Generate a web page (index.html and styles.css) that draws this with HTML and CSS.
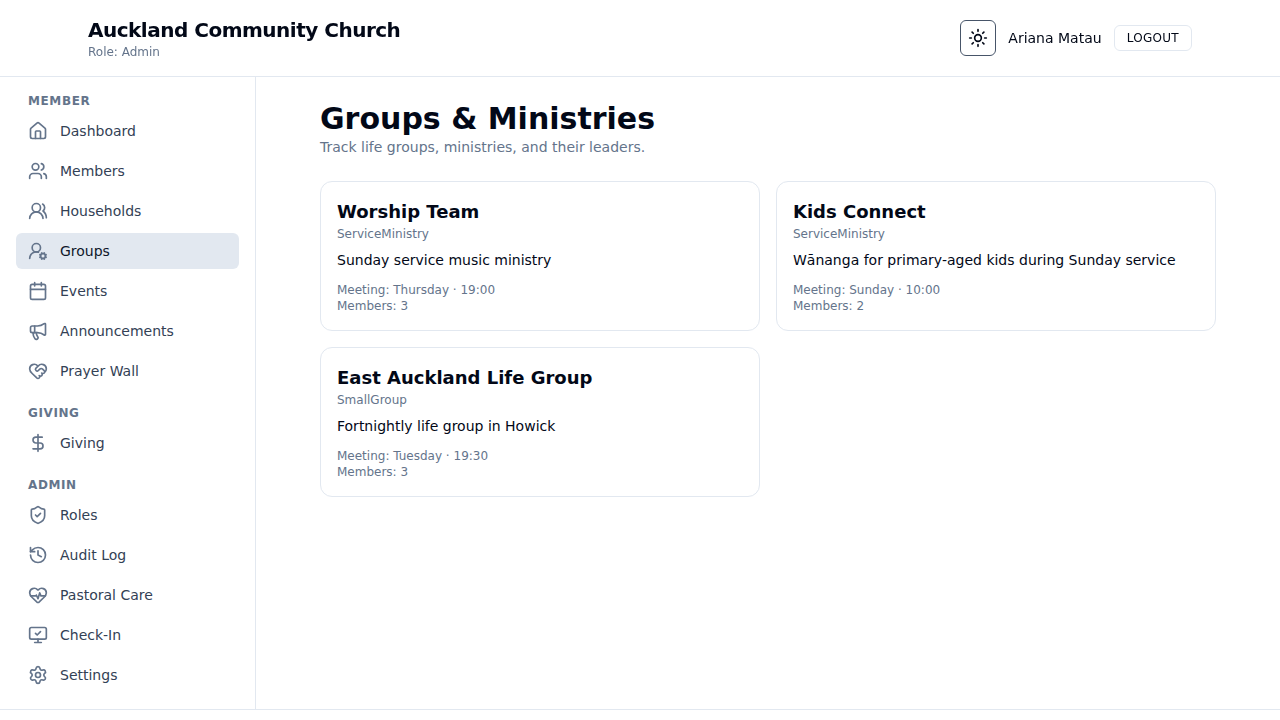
FILE: index.html
```html
<!DOCTYPE html>
<html lang="en">
<head>
<meta charset="utf-8">
<meta name="viewport" content="width=device-width, initial-scale=1">
<title>Groups &amp; Ministries</title>
<link rel="stylesheet" href="styles.css">
</head>
<body>
<header class="topbar">
  <div class="topbar-inner">
    <div>
      <div class="brand">Auckland Community Church</div>
      <p class="role">Role: Admin</p>
    </div>
    <div class="account">
      <button class="theme-toggle" type="button" aria-label="Toggle theme">
        <svg class="icon" viewBox="0 0 24 24"><circle cx="12" cy="12" r="4"/><path d="M12 2v2M12 20v2M4.93 4.93l1.41 1.41M17.66 17.66l1.41 1.41M2 12h2M20 12h2M6.34 17.66l-1.41 1.41M19.07 4.93l-1.41 1.41"/></svg>
      </button>
      <span class="user-name">Ariana Matau</span>
      <button class="logout" type="button">LOGOUT</button>
    </div>
  </div>
</header>
<div class="shell">
  <nav class="sidebar" aria-label="Main">
    <section class="nav-group">
      <h2 class="nav-heading">MEMBER</h2>
      <a class="nav-link" href="#"><svg class="icon" viewBox="0 0 24 24"><path d="M15 21v-8a1 1 0 0 0-1-1h-4a1 1 0 0 0-1 1v8"/><path d="M3 10a2 2 0 0 1 .709-1.528l7-5.999a2 2 0 0 1 2.582 0l7 5.999A2 2 0 0 1 21 10v9a2 2 0 0 1-2 2H5a2 2 0 0 1-2-2z"/></svg>Dashboard</a>
      <a class="nav-link" href="#"><svg class="icon" viewBox="0 0 24 24"><path d="M16 21v-2a4 4 0 0 0-4-4H6a4 4 0 0 0-4 4v2"/><path d="M16 3.128a4 4 0 0 1 0 7.744"/><path d="M22 21v-2a4 4 0 0 0-3-3.87"/><circle cx="9" cy="7" r="4"/></svg>Members</a>
      <a class="nav-link" href="#"><svg class="icon" viewBox="0 0 24 24"><path d="M18 21a8 8 0 0 0-16 0"/><circle cx="10" cy="8" r="5"/><path d="M22 20c0-3.37-2-6.5-4-8a5 5 0 0 0-.45-8.3"/></svg>Households</a>
      <a class="nav-link is-active" href="#" aria-current="page"><svg class="icon" viewBox="0 0 24 24"><path d="m14.305 19.53.923-.382M15.228 16.852l-.923-.383M16.852 15.228l-.383-.923M16.852 20.772l-.383.924M19.148 15.228l.383-.923M19.53 21.696l-.382-.924M20.772 16.852l.924-.383M20.772 19.148l.924.383"/><path d="M2 21a8 8 0 0 1 10.434-7.62"/><circle cx="10" cy="8" r="5"/><circle cx="18" cy="18" r="3"/></svg>Groups</a>
      <a class="nav-link" href="#"><svg class="icon" viewBox="0 0 24 24"><path d="M8 2v4M16 2v4M3 10h18"/><rect width="18" height="18" x="3" y="4" rx="2"/></svg>Events</a>
      <a class="nav-link" href="#"><svg class="icon" viewBox="0 0 24 24"><path d="M11 6a13 13 0 0 0 8.4-2.8A1 1 0 0 1 21 4v12a1 1 0 0 1-1.6.8A13 13 0 0 0 11 14H5a2 2 0 0 1-2-2V8a2 2 0 0 1 2-2z"/><path d="M6 14a12 12 0 0 0 2.4 7.2 2 2 0 0 0 3.2-2.4A8 8 0 0 1 10 14"/><path d="M8 6v8"/></svg>Announcements</a>
      <a class="nav-link" href="#"><svg class="icon" viewBox="0 0 24 24"><path d="M19.414 14.414C21 12.828 22 11.5 22 9.5a5.5 5.5 0 0 0-9.591-3.676.6.6 0 0 1-.818.001A5.5 5.5 0 0 0 2 9.5c0 2.3 1.5 4 3 5.5l5.535 5.362a2 2 0 0 0 2.879.052 2.12 2.12 0 0 0-.004-3 2.124 2.124 0 1 0 3-3 2.124 2.124 0 0 0 3.004 0 2 2 0 0 0 0-2.828l-1.881-1.882a2.41 2.41 0 0 0-3.409 0l-1.71 1.71a2 2 0 0 1-2.828 0 2 2 0 0 1 0-2.828l2.823-2.762"/></svg>Prayer Wall</a>
    </section>
    <section class="nav-group">
      <h2 class="nav-heading">GIVING</h2>
      <a class="nav-link" href="#"><svg class="icon" viewBox="0 0 24 24"><path d="M12 2v20"/><path d="M17 5H9.5a3.5 3.5 0 0 0 0 7h5a3.5 3.5 0 0 1 0 7H6"/></svg>Giving</a>
    </section>
    <section class="nav-group">
      <h2 class="nav-heading">ADMIN</h2>
      <a class="nav-link" href="#"><svg class="icon" viewBox="0 0 24 24"><path d="M20 13c0 5-3.5 7.5-7.66 8.95a1 1 0 0 1-.67-.01C7.5 20.5 4 18 4 13V6a1 1 0 0 1 1-1c2 0 4.5-1.2 6.24-2.72a1.17 1.17 0 0 1 1.52 0C14.51 3.81 17 5 19 5a1 1 0 0 1 1 1z"/><path d="m9 12 2 2 4-4"/></svg>Roles</a>
      <a class="nav-link" href="#"><svg class="icon" viewBox="0 0 24 24"><path d="M3 12a9 9 0 1 0 9-9 9.75 9.75 0 0 0-6.74 2.74L3 8"/><path d="M3 3v5h5"/><path d="M12 7v5l4 2"/></svg>Audit Log</a>
      <a class="nav-link" href="#"><svg class="icon" viewBox="0 0 24 24"><path d="M2 9.5a5.5 5.5 0 0 1 9.591-3.676.56.56 0 0 0 .818 0A5.49 5.49 0 0 1 22 9.5c0 2.29-1.5 4-3 5.5l-5.492 5.313a2 2 0 0 1-3 .019L5 15c-1.5-1.5-3-3.2-3-5.5"/><path d="M3.22 13H9.5l.5-1 2 4.5 2-7 1.5 3.5h5.27"/></svg>Pastoral Care</a>
      <a class="nav-link" href="#"><svg class="icon" viewBox="0 0 24 24"><path d="m9 10 2 2 4-4"/><rect width="20" height="14" x="2" y="3" rx="2"/><path d="M12 17v4M8 21h8"/></svg>Check-In</a>
      <a class="nav-link" href="#"><svg class="icon" viewBox="0 0 24 24"><path d="M9.671 4.136a2.34 2.34 0 0 1 4.659 0 2.34 2.34 0 0 0 3.319 1.915 2.34 2.34 0 0 1 2.33 4.033 2.34 2.34 0 0 0 0 3.831 2.34 2.34 0 0 1-2.33 4.033 2.34 2.34 0 0 0-3.319 1.915 2.34 2.34 0 0 1-4.659 0 2.34 2.34 0 0 0-3.32-1.915 2.34 2.34 0 0 1-2.33-4.033 2.34 2.34 0 0 0 0-3.831A2.34 2.34 0 0 1 6.35 6.051a2.34 2.34 0 0 0 3.319-1.915"/><circle cx="12" cy="12" r="3"/></svg>Settings</a>
    </section>
  </nav>
  <main class="content">
    <div class="page">
      <div>
        <h1 class="page-title">Groups &amp; Ministries</h1>
        <p class="page-subtitle">Track life groups, ministries, and their leaders.</p>
      </div>
      <div class="cards">
        <article class="card">
          <h2 class="card-title">Worship Team</h2>
          <p class="card-type">ServiceMinistry</p>
          <p class="card-text">Sunday service music ministry</p>
          <div class="card-meta"><p>Meeting: Thursday · 19:00</p><p>Members: 3</p></div>
        </article>
        <article class="card">
          <h2 class="card-title">Kids Connect</h2>
          <p class="card-type">ServiceMinistry</p>
          <p class="card-text">Wānanga for primary-aged kids during Sunday service</p>
          <div class="card-meta"><p>Meeting: Sunday · 10:00</p><p>Members: 2</p></div>
        </article>
        <article class="card">
          <h2 class="card-title">East Auckland Life Group</h2>
          <p class="card-type">SmallGroup</p>
          <p class="card-text">Fortnightly life group in Howick</p>
          <div class="card-meta"><p>Meeting: Tuesday · 19:30</p><p>Members: 3</p></div>
        </article>
      </div>
    </div>
  </main>
</div>
<footer class="footer"></footer>
</body>
</html>
```
FILE: styles.css
```css
*, *::before, *::after { box-sizing: border-box; }

body, h1, h2, p { margin: 0; }

body {
  display: flex;
  flex-direction: column;
  min-height: 100vh;
  background: #fff;
  color: #020817;
  font-family: "DejaVu Sans", sans-serif;
  font-size: 14px;
  line-height: 20px;
}

button {
  background: transparent;
  color: inherit;
  font: inherit;
  cursor: pointer;
}

.icon {
  width: 20px;
  height: 20px;
  flex-shrink: 0;
  fill: none;
  stroke: currentColor;
  stroke-width: 2;
  stroke-linecap: round;
  stroke-linejoin: round;
}

.topbar {
  position: sticky;
  top: 0;
  z-index: 10;
  border-bottom: 1px solid #e2e8f0;
  background: rgb(255 255 255 / 80%);
  backdrop-filter: blur(8px);
}

.topbar-inner {
  display: flex;
  align-items: center;
  justify-content: space-between;
  max-width: 1152px;
  margin: 0 auto;
  padding: 16px 24px;
}

.brand {
  font-size: 20px;
  font-weight: 600;
  line-height: 28px;
  letter-spacing: -0.025em;
}

.role {
  color: #64748b;
  font-size: 12px;
  line-height: 16px;
}

.account {
  display: flex;
  align-items: center;
  gap: 12px;
}

.theme-toggle {
  display: flex;
  align-items: center;
  justify-content: center;
  width: 36px;
  height: 36px;
  padding: 0;
  border: 1px solid #475569;
  border-radius: 6px;
}

.logout {
  padding: 4px 12px;
  border: 1px solid #e2e8f0;
  border-radius: 6px;
  font-size: 12px;
  line-height: 16px;
  letter-spacing: 0.025em;
}

.shell {
  display: flex;
}

.sidebar {
  display: flex;
  flex-direction: column;
  flex-shrink: 0;
  gap: 16px;
  width: 256px;
  padding: 16px;
  border-right: 1px solid #e2e8f0;
}

.nav-group {
  display: flex;
  flex-direction: column;
  gap: 4px;
}

.nav-heading {
  padding: 0 12px;
  color: #64748b;
  font-size: 12px;
  font-weight: 600;
  line-height: 16px;
  letter-spacing: 0.05em;
}

.nav-link {
  display: flex;
  align-items: center;
  gap: 12px;
  padding: 8px 12px;
  border-radius: 6px;
  color: #334155;
  text-decoration: none;
}

.nav-link .icon { color: #64748b; }

.nav-link.is-active {
  background: #e2e8f0;
  color: #0f172a;
}

.content {
  flex: 1;
  min-width: 0;
  padding: 24px;
}

.page {
  display: flex;
  flex-direction: column;
  gap: 24px;
  max-width: 896px;
  margin: 0 auto;
}

.page-title {
  font-size: 30px;
  font-weight: 700;
  line-height: 36px;
}

.page-subtitle { color: #64748b; }

.cards {
  display: grid;
  grid-template-columns: repeat(2, minmax(0, 1fr));
  gap: 16px;
}

.card {
  padding: 16px;
  border: 1px solid #e2e8f0;
  border-radius: 12px;
}

.card-title {
  font-size: 18px;
  font-weight: 600;
  line-height: 28px;
}

.card-type,
.card-meta {
  color: #64748b;
  font-size: 12px;
  line-height: 16px;
}

.card-text { margin-top: 8px; }

.card-meta { margin-top: 12px; }

.footer {
  flex: 1;
  border-top: 1px solid #e2e8f0;
}
```
